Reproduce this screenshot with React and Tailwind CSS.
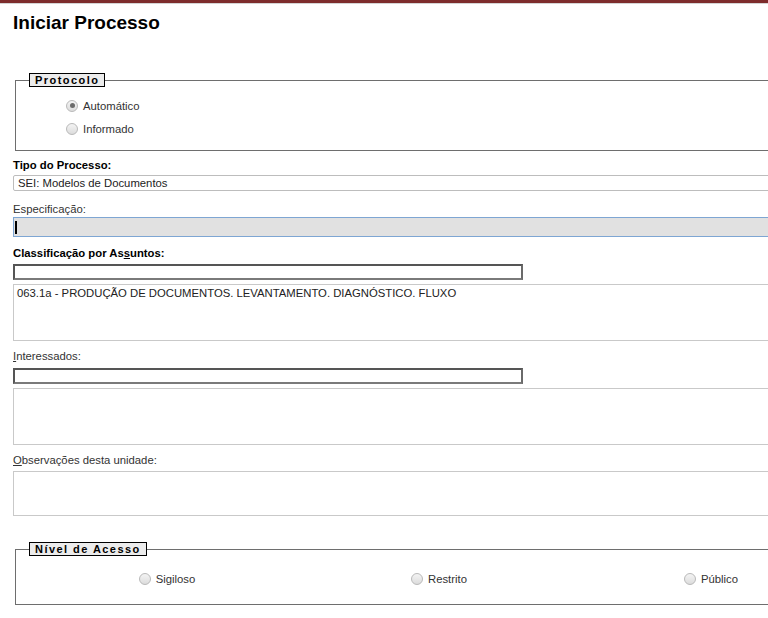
import React from 'react';

const FONT = { fontFamily: '"Liberation Sans", Arial, sans-serif' };

const Radio = ({ checked, label }) => (
  <label className="flex items-center gap-[5px] text-[11.3px] leading-[14px] text-[#333]">
    <span className="flex h-[12px] w-[12px] items-center justify-center rounded-full border border-[#b9b9b9] bg-gradient-to-b from-[#f4f4f4] to-[#dcdcdc]">
      {checked && <span className="h-[5px] w-[5px] rounded-full bg-[#6b6b6b]" />}
    </span>
    {label}
  </label>
);

const Legend = ({ children }) => (
  <legend className="ml-[13px] border border-black bg-[#ececec] px-[5px] text-[11px] font-bold leading-[12px] tracking-[1.45px] text-black">
    {children}
  </legend>
);

const Label = ({ children, bold }) => (
  <div className={`text-[11.3px] leading-[14px] ${bold ? 'font-bold text-black' : 'text-[#333]'}`}>{children}</div>
);

const SmallInput = ({ className }) => (
  <div className={`h-[16px] w-[510px] border-2 border-t-[#555] border-l-[#555] border-r-[#6a6a6a] border-b-[#7a7a7a] bg-white ${className}`} />
);

const App = () => {
  return (
    <div className="min-h-screen w-full overflow-hidden bg-white" style={FONT}>
      <div className="h-[3px] w-full bg-[#7d2c2c]" />
      <div className="h-px w-full bg-[#d4d4d4]" />

      <div className="w-[850px] pl-[13px]">
        <h1 className="mt-[7px] text-[19px] font-bold leading-[24px] text-black">Iniciar Processo</h1>

        <fieldset className="ml-[2px] mt-[38px] border border-[#6e6e6e] pb-[10px] pt-[7px]">
          <Legend>Protocolo</Legend>
          <div className="pl-[50px]">
            <div className="flex h-[23px] items-center">
              <Radio checked label="Automático" />
            </div>
            <div className="flex h-[23px] items-center">
              <Radio label="Informado" />
            </div>
          </div>
        </fieldset>

        <div className="mt-[7px]">
          <Label bold>Tipo do Processo:</Label>
        </div>
        <div className="mt-[3px] flex h-[16px] items-center rounded-[2px] border border-[#bdbdbd] bg-white pl-[4px] text-[11.3px] text-[#222]">
          SEI: Modelos de Documentos
        </div>

        <div className="mt-[11px]">
          <Label>Especificação:</Label>
        </div>
        <div className="mt-px flex h-[20px] items-center border border-[#7ea6d3] bg-[#e1e1e1] pl-[1px]">
          <span className="h-[13px] w-[2px] bg-black" />
        </div>

        <div className="mt-[9px]">
          <Label bold>
            Classificação por As<span className="underline">s</span>untos:
          </Label>
        </div>
        <SmallInput className="mt-[4px]" />
        <div className="mt-[4px] h-[57px] border border-[#c9c9c9] bg-white pl-[3px] pt-[1px] text-[11.3px] leading-[14px] text-[#222]">
          063.1a - PRODUÇÃO DE DOCUMENTOS. LEVANTAMENTO. DIAGNÓSTICO. FLUXO
        </div>

        <div className="mt-[8px]">
          <Label>
            <span className="underline">I</span>nteressados:
          </Label>
        </div>
        <SmallInput className="mt-[5px]" />
        <div className="mt-[4px] h-[57px] border border-[#c9c9c9] bg-white" />

        <div className="mt-[8px]">
          <Label>
            <span className="underline">O</span>bservações desta unidade:
          </Label>
        </div>
        <div className="mt-[4px] h-[45px] border border-[#c9c9c9] bg-white" />

        <fieldset className="ml-[2px] mt-[26px] border border-[#6e6e6e] pb-[15px] pt-[13px]">
          <Legend>Nível de Acesso</Legend>
          <div className="grid h-[20px] grid-cols-[272px_272px_272px] items-center justify-items-center pl-[15px]">
            <Radio label="Sigiloso" />
            <Radio label="Restrito" />
            <Radio label="Público" />
          </div>
        </fieldset>
      </div>
    </div>
  );
};

export default App;
